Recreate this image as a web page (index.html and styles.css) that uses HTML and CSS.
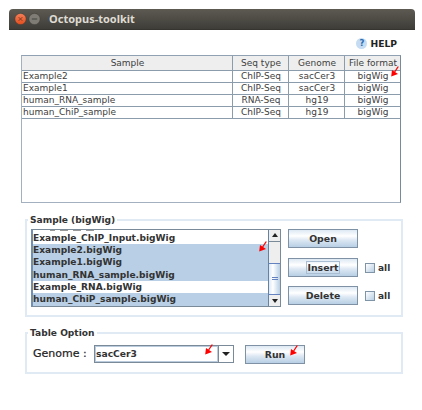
FILE: index.html
```html
<!DOCTYPE html>
<html lang="en">
<head>
<meta charset="utf-8">
<title>Octopus-toolkit</title>
<link rel="stylesheet" href="styles.css">
</head>
<body>
<svg width="0" height="0" class="defs"><symbol id="arrow" viewBox="0 0 8 11"><path d="M7.3.5 3.6 6" stroke="#f00" stroke-width="1.3" fill="none"/><path d="M.2 10.5 1 4 7 8z" fill="#f00"/></symbol></svg>
<div class="window">
  <header class="titlebar">
    <svg width="28" height="14" viewBox="0 0 28 14">
      <defs><linearGradient id="close" x2="0" y2="1"><stop stop-color="#f58058"/><stop offset="1" stop-color="#e44d1c"/></linearGradient></defs>
      <circle cx="6.5" cy="7" r="5.6" fill="url(#close)" stroke="#3b3833" stroke-width=".4"/>
      <path d="m4.7 5.2 3.6 3.6m0-3.6-3.6 3.6" stroke="#7b3a26" stroke-width="1"/>
      <circle cx="20.5" cy="7" r="5.6" fill="#7f7c75" stroke="#3b3833" stroke-width=".4"/>
      <path d="M17.8 7h5.4" stroke="#4a4842" stroke-width="1.1"/>
    </svg>
    <span class="title">Octopus-toolkit</span>
  </header>
  <div class="help"><span class="q">?</span><span>HELP</span></div>
  <div class="table">
    <div class="tr th"><span>Sample</span><span>Seq type</span><span>Genome</span><span>File format</span></div>
    <div class="tr"><span>Example2</span><span>ChIP-Seq</span><span>sacCer3</span><span>bigWig</span></div>
    <div class="tr"><span>Example1</span><span>ChIP-Seq</span><span>sacCer3</span><span>bigWig</span></div>
    <div class="tr"><span>human_RNA_sample</span><span>RNA-Seq</span><span>hg19</span><span>bigWig</span></div>
    <div class="tr"><span>human_ChiP_sample</span><span>ChIP-Seq</span><span>hg19</span><span>bigWig</span></div>
    <svg class="mark"><use href="#arrow"/></svg>
  </div>
  <section class="group samples">
    <h2>Sample (bigWig)</h2>
    <div class="listbox">
      <div class="list">
        <div class="cut"><i></i><i></i><i></i><i></i></div>
        <div class="item">Example_ChIP_Input.bigWig</div>
        <div class="item sel">Example2.bigWig</div>
        <div class="item sel">Example1.bigWig</div>
        <div class="item sel">human_RNA_sample.bigWig</div>
        <div class="item">Example_RNA.bigWig</div>
        <div class="item sel">human_ChiP_sample.bigWig</div>
      </div>
      <div class="scroll">
        <div class="step"><svg width="6" height="4"><path d="m3 0 3 4H0z" fill="#222"/></svg></div>
        <div class="track"></div>
        <div class="thumb"><i></i><i></i></div>
        <div class="step"><svg width="6" height="4"><path d="m3 4 3-4H0z" fill="#222"/></svg></div>
      </div>
      <svg class="mark"><use href="#arrow"/></svg>
    </div>
    <div class="actions">
      <div class="action"><button>Open</button></div>
      <div class="action"><button><span class="focus">Insert</span></button><i class="check"></i><label>all</label></div>
      <div class="action"><button>Delete</button><i class="check"></i><label>all</label></div>
    </div>
  </section>
  <section class="group options">
    <h2>Table Option</h2>
    <span class="label">Genome :</span>
    <div class="combo"><span class="value">sacCer3</span><span class="drop"><svg width="8" height="4"><path d="M0 0h8L4 4z" fill="#222"/></svg></span><svg class="mark"><use href="#arrow"/></svg></div>
    <button class="run">Run<svg class="mark"><use href="#arrow"/></svg></button>
  </section>
</div>
</body>
</html>
```
FILE: styles.css
```css
* { box-sizing: border-box; }
body { margin: 0; background: #fff; color: #333; font: 9px/12px "DejaVu Sans", sans-serif; }
.defs { position: absolute; }
svg { display: block; flex: none; }
.window { width: 406px; margin: 9px 0 0 9px; }
.titlebar { height: 21px; display: flex; align-items: center; padding-left: 5px; border-radius: 4px 4px 0 0; background: linear-gradient(#5d5a52, #3f3d38); border-bottom: 1px solid #37352f; }
.title { margin-left: 7px; font: bold 11px/14px "Noto Sans", sans-serif; color: #dfdbd2; }
.help { display: flex; justify-content: flex-end; align-items: center; gap: 3px; height: 11px; margin: 8px 18px 0 0; font-weight: bold; font-size: 9.2px; color: #222; }
.q { width: 11px; height: 11px; border-radius: 50%; background: #c5dcf3; color: #2c6cb0; text-align: center; line-height: 11px; font-size: 8.5px; }

.table { position: relative; width: 380px; height: 148px; margin: 6px 0 0 12px; border: 1px solid #a3b0bf; border-top-color: #8fa1b3; border-right: 1px solid #7a8a99; color: #404040; }
.tr { display: grid; grid-template-columns: 211px 56px 56px 55px; height: 12px; }
.tr span { border-right: 1px solid #8b9cad; border-bottom: 1px solid #8b9cad; padding-left: 1px; line-height: 12px; white-space: nowrap; }
.tr span:last-child { border-right: 0; }
.tr span + span, .th span { text-align: center; }
.tr.th { height: 14px; background: #eee; }
.tr.th span { line-height: 14px; }
.mark { position: absolute; width: 8px; height: 11px; }
.table .mark { left: 369px; top: 10px; }

.group { position: relative; width: 378px; margin-left: 16px; border: 2px solid #dfeaf4; display: flex; }
.group h2 { position: absolute; left: 1px; top: -7px; margin: 0; padding: 0 2px; background: #fff; font-size: 9.1px; line-height: 13px; color: #333; white-space: nowrap; }
.samples { height: 98px; margin-top: 16px; padding: 8px 0 0 4px; }
.listbox { position: relative; display: flex; width: 250px; height: 78px; border: 1px solid #7a8a99; border-left: 2px solid #6f8fb5; font-weight: bold; font-size: 9.1px; }
.list { flex: 1; overflow: hidden; }
.cut { height: 1.5px; padding-left: 17px; display: flex; gap: 5px; }
.cut i { height: 1px; width: 5px; background: #999; }
.cut i:nth-child(n+2) { width: 8px; }
.item { height: 12.4px; line-height: 13px; white-space: nowrap; }
.sel { background: #b8cfe5; }
.scroll { width: 12px; border-left: 1px solid #6382a5; background: #eee; display: flex; flex-direction: column; }
.step { height: 12px; display: flex; align-items: center; justify-content: center; border-bottom: 1px solid #7a8a99; }
.step:last-child { height: 11px; border-bottom: 0; }
.track { height: 21px; }
.thumb { height: 33px; border: 1px solid #6382bf; border-left: 0; border-right: 0; background: linear-gradient(90deg, #dce8f5, #fff 35%, #b8cfe5); display: flex; flex-direction: column; gap: 1px; align-items: center; justify-content: center; }
.thumb i { width: 6px; height: 1px; background: #6382bf; }
.listbox .mark { left: 226px; top: 11px; }
.actions { margin-left: 7px; }
.action { display: flex; align-items: center; height: 19px; }
.action + .action { margin-top: 10px; }
.action:last-child { margin-top: 9px; }
button { width: 70px; height: 19px; padding: 0; border: 1px solid #7f92a5; background: linear-gradient(#dde8f3, #fff 35%, #dce7f3 60%, #b8cfe5); font: bold 9.4px/12px "DejaVu Sans", sans-serif; color: #333; }
.focus { border: 1px solid #a9bdd3; }
.check { width: 10px; height: 10px; margin: 0 3px 0 7px; border: 1px solid #8094a8; background: linear-gradient(135deg, #fff, #b8cfe5); }
label { font-weight: bold; font-size: 9px; }

.options { height: 42px; margin-top: 15px; padding: 11px 0 0 6px; }
.label { width: 61px; font-size: 11px; line-height: 18px; white-space: nowrap; color: #222; -webkit-text-stroke: .2px #222; }
.combo { position: relative; display: flex; width: 140px; height: 18px; border: 1px solid #7a8a99; font-weight: bold; font-size: 9.2px; line-height: 16px; }
.value { flex: 1; border: 1px solid #b9cbdc; line-height: 14px; }
.drop { width: 15px; border-left: 1px solid #7a8a99; display: flex; align-items: center; justify-content: center; }
.combo .mark { left: 110px; top: -2px; }
.run { position: relative; width: 60px; margin-left: 11px; }
.run .mark { left: 44px; top: -1px; }
```
